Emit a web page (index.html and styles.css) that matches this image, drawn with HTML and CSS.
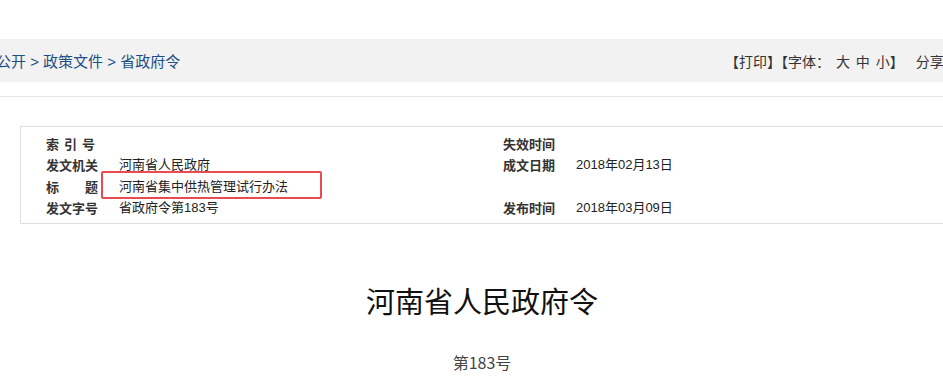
FILE: index.html
```html
<!DOCTYPE html>
<html lang="zh-CN">

<head>
    <meta charset="UTF-8">
    <meta name="viewport" content="width=device-width, initial-scale=1.0">
    <title>河南省集中供热管理试行办法</title>
    <link rel="stylesheet" href="styles.css">
</head>

<body>
    <!-- Top navigation bar -->
    <div class="nav-bar">
        <div class="crumbs">公开 &gt; 政策文件 &gt; 省政府令</div>
        <div class="tools">【打印】【字体： 大 中 小】<span class="share">分享</span></div>
    </div>
    <div class="divider"></div>

    <div class="content">
        <!-- Document info table -->
        <div class="info-box">
            <div class="info-row">
                <div class="cell"><span class="label spaced">索引号</span><span class="value"></span></div>
                <div class="cell"><span class="label">失效时间</span><span class="value"></span></div>
            </div>
            <div class="info-row">
                <div class="cell"><span class="label">发文机关</span><span class="value">河南省人民政府</span></div>
                <div class="cell"><span class="label">成文日期</span><span class="value">2018年02月13日</span></div>
            </div>
            <div class="info-row">
                <div class="cell"><span class="label split"><span>标</span><span>题</span></span><span class="value">河南省集中供热管理试行办法</span></div>
                <div class="cell"></div>
                <div class="mark"></div>
            </div>
            <div class="info-row">
                <div class="cell"><span class="label">发文字号</span><span class="value">省政府令第183号</span></div>
                <div class="cell"><span class="label">发布时间</span><span class="value">2018年03月09日</span></div>
            </div>
        </div>

        <h1 class="doc-title">河南省人民政府令</h1>
        <p class="doc-no">第183号</p>
    </div>
</body>

</html>
```

FILE: styles.css
```css
/* General body styles */
body {
    margin: 0;
    padding: 0;
    overflow: hidden;
    background-color: #fff;
    font-family: "Liberation Sans", Arial, "Noto Sans CJK SC", sans-serif;
    color: #222;
}

/* Navigation bar */
.nav-bar {
    margin-top: 39px;
    height: 43px;
    background-color: #f2f2f2;
    display: grid;
    grid-template-columns: 725px max-content;
    align-items: center;
    font-size: 15px;
}

.crumbs {
    margin-left: -4px;
    color: #1d4f86;
}

.tools {
    color: #333;
    font-size: 14px;
    white-space: pre;
    word-spacing: 2px;
}

.share {
    margin-left: 12px;
}

.divider {
    margin-top: 14px;
    border-top: 1px solid #e8e8e8;
}

/* Main content */
.content {
    margin-left: 20px;
    width: 924px;
}

.info-box {
    margin-top: 29px;
    border: 1px solid #dedede;
    border-right: none;
    padding: 6px 0 5px 25px;
    font-size: 13px;
}

.info-row {
    display: flex;
    position: relative;
    height: 21.3px;
    line-height: 21.3px;
}

.cell {
    display: flex;
    flex-shrink: 0;
    width: 457px;
}

.label {
    width: 73px;
    font-weight: bold;
    color: #333;
    font-family: "Noto Sans CJK SC", sans-serif;
}

.label.spaced {
    letter-spacing: 5px;
}

.label.split {
    display: flex;
    justify-content: space-between;
    width: 52px;
    margin-right: 21px;
}

.value {
    color: #222;
}

/* Red highlight around the title row */
.mark {
    position: absolute;
    left: 55px;
    top: -5px;
    width: 217px;
    height: 24px;
    border: 2px solid #ea4b50;
    border-radius: 2px;
}

/* Document heading */
.doc-title {
    margin: 55px 0 0;
    text-align: center;
    font-size: 29px;
    font-weight: normal;
    color: #111;
    font-family: "Noto Sans CJK SC", sans-serif;
}

.doc-no {
    margin: 29px 0 0;
    text-align: center;
    font-size: 16px;
    color: #444;
    font-family: "Noto Sans CJK SC", sans-serif;
}
```
